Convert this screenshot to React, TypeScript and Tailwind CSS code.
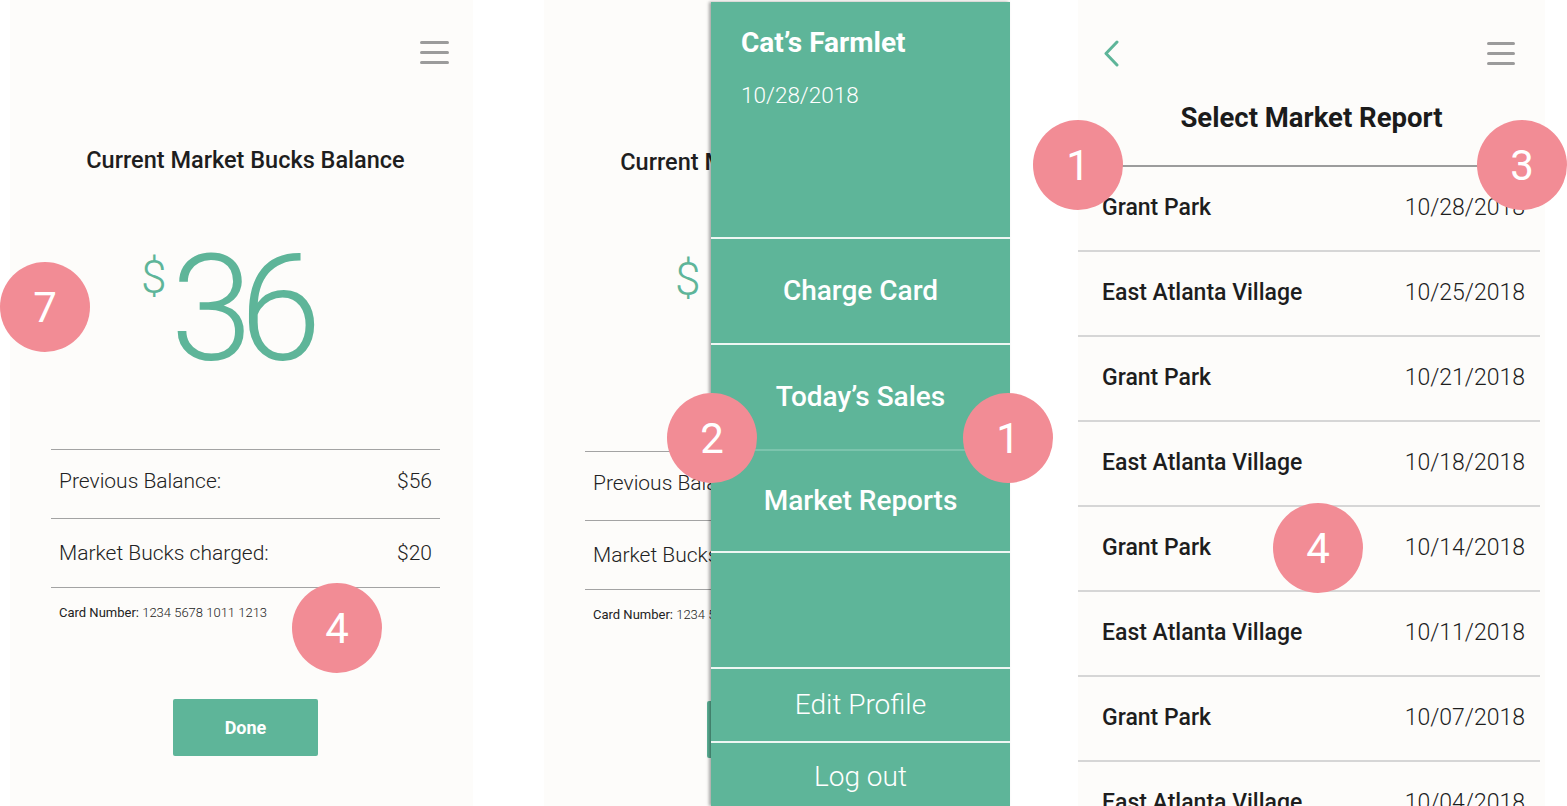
import React from "react";

const GREEN = "bg-[#5eb599]";

const marketRows = [
  { name: "Grant Park", date: "10/28/2018" },
  { name: "East Atlanta Village", date: "10/25/2018" },
  { name: "Grant Park", date: "10/21/2018" },
  { name: "East Atlanta Village", date: "10/18/2018" },
  { name: "Grant Park", date: "10/14/2018" },
  { name: "East Atlanta Village", date: "10/11/2018" },
  { name: "Grant Park", date: "10/07/2018" },
  { name: "East Atlanta Village", date: "10/04/2018" },
];

const badges = [
  { n: "7", cls: "left-[0px] top-[262px]" },
  { n: "4", cls: "left-[292px] top-[583px]" },
  { n: "2", cls: "left-[667px] top-[393px]" },
  { n: "1", cls: "left-[963px] top-[393px]" },
  { n: "1", cls: "left-[1033px] top-[120px]" },
  { n: "3", cls: "left-[1477px] top-[120px]" },
  { n: "4", cls: "left-[1273px] top-[503px]" },
];

function Hamburger({ className = "" }: { className?: string }) {
  return (
    <div className={`flex flex-col gap-[7px] ${className}`}>
      <span className="h-[3px] rounded-full bg-[#9b9b9b]" />
      <span className="h-[3px] rounded-full bg-[#9b9b9b]" />
      <span className="h-[3px] rounded-full bg-[#9b9b9b]" />
    </div>
  );
}

function BalanceScreen() {
  return (
    <div className="flex flex-col">
      {/* top bar */}
      <div className="flex justify-end pt-[41px] pr-[24px]">
        <Hamburger className="w-[29px]" />
      </div>

      <h2 className="mt-[82px] ml-[41px] w-[389px] text-center text-[23.5px] leading-[28px] font-medium text-[#1e1e1e]">
        Current Market Bucks Balance
      </h2>

      {/* balance */}
      <div className="mt-[62px] flex items-start pl-[131px] text-[#5eb599]">
        <span className="mt-[18px] text-[46px] leading-none font-light">$</span>
        <span className="ml-[4px] text-[148px] leading-none font-light tracking-[-13px]">36</span>
      </div>

      <div className="mt-[65px] ml-[41px] w-[389px] border-b border-[#a3a3a3]">
        <div className="flex h-[69px] items-center justify-between border-t border-[#a3a3a3] px-2 pb-[5px] text-[21px] font-light text-[#222]">
          <span>Previous Balance:</span>
          <span>$56</span>
        </div>
        <div className="flex h-[69px] items-center justify-between border-t border-[#a3a3a3] px-2 pt-[2px] text-[21px] font-light text-[#222]">
          <span>Market Bucks charged:</span>
          <span>$20</span>
        </div>
      </div>

      <p className="mt-[17px] ml-[49px] text-[13px] leading-[16px] text-[#222]">
        Card Number: <span className="font-light">1234 5678 1011 1213</span>
      </p>

      <button className={`mt-[78px] ml-[163px] h-[57px] w-[145px] rounded-[2px] ${GREEN} text-[18px] font-bold text-white`}>
        Done
      </button>
    </div>
  );
}

function SideMenu() {
  const line = "shrink-0 border-t-2 border-[#eef7f3]";
  return (
    <div className={`absolute top-[2px] bottom-0 left-[167px] w-[299px] ${GREEN} shadow-[-2px_0_3px_rgba(0,0,0,0.35)] text-white flex flex-col overflow-hidden`}>
      <div className="h-[235px] shrink-0 pl-[30px] pt-[25px]">
        <div className="text-[28px] leading-[32px] font-bold">Cat’s Farmlet</div>
        <div className="mt-[22px] text-[22.5px] leading-[28px] font-light">10/28/2018</div>
      </div>
      <div className={`${line} flex h-[106px] items-center justify-center text-[28px] font-medium`}>Charge Card</div>
      <div className={`${line} flex h-[106px] items-center justify-center text-[28px] font-medium`}>Today’s Sales</div>
      <div className="shrink-0 border-t-2 border-[#7cc4ad] flex h-[102px] items-center justify-center text-[28px] font-medium">Market Reports</div>
      <div className={`${line} h-[116px]`} />
      <div className={`${line} flex h-[74px] items-center justify-center text-[28px] font-light`}>Edit Profile</div>
      <div className={`${line} flex h-[70px] items-center justify-center text-[28px] font-light`}>Log out</div>
    </div>
  );
}

function ReportScreen() {
  return (
    <div className="flex flex-col">
      <div className="flex items-start justify-between pt-[40px] pl-[25px] pr-[30px]">
        <svg width="16" height="27" viewBox="0 0 16 27" fill="none">
          <polyline points="14,2 3,13.5 14,25" stroke="#5eb599" strokeWidth="3" strokeLinecap="round" strokeLinejoin="round" />
        </svg>
        <Hamburger className="w-[28px] mt-[2px]" />
      </div>

      <h2 className="mt-[35px] text-center text-[27.5px] leading-[32px] font-bold text-[#1b1b1b]">
        Select Market Report
      </h2>

      <div className="mt-[31px] w-[462px] border-t-2 border-[#9c9c9c]">
        {marketRows.map((r, i) => (
          <div
            key={i}
            className="flex h-[85px] items-center justify-between border-b-2 border-[#d6d6d6] pl-[24px] pr-[15px] text-[23px] text-[#1e1e1e]"
          >
            <span className="font-medium">{r.name}</span>
            <span className="font-light">{r.date}</span>
          </div>
        ))}
      </div>
    </div>
  );
}

export default function App() {
  return (
    <div className="relative flex h-[806px] w-[1567px] overflow-hidden bg-white font-['Roboto',sans-serif]">
      <section className="ml-[10px] w-[463px] bg-[#fdfcfa]">
        <BalanceScreen />
      </section>

      <section className="relative ml-[71px] w-[466px] bg-[#fdfcfa] pt-[2px]">
        <BalanceScreen />
        <SideMenu />
      </section>

      <section className="ml-[68px] w-[467px] bg-[#fdfcfa]">
        <ReportScreen />
      </section>

      {badges.map((b, i) => (
        <div
          key={i}
          className={`absolute ${b.cls} flex h-[90px] w-[90px] items-center justify-center rounded-full bg-[#f28c95] text-[42px] font-normal text-white`}
        >
          {b.n}
        </div>
      ))}
    </div>
  );
}
